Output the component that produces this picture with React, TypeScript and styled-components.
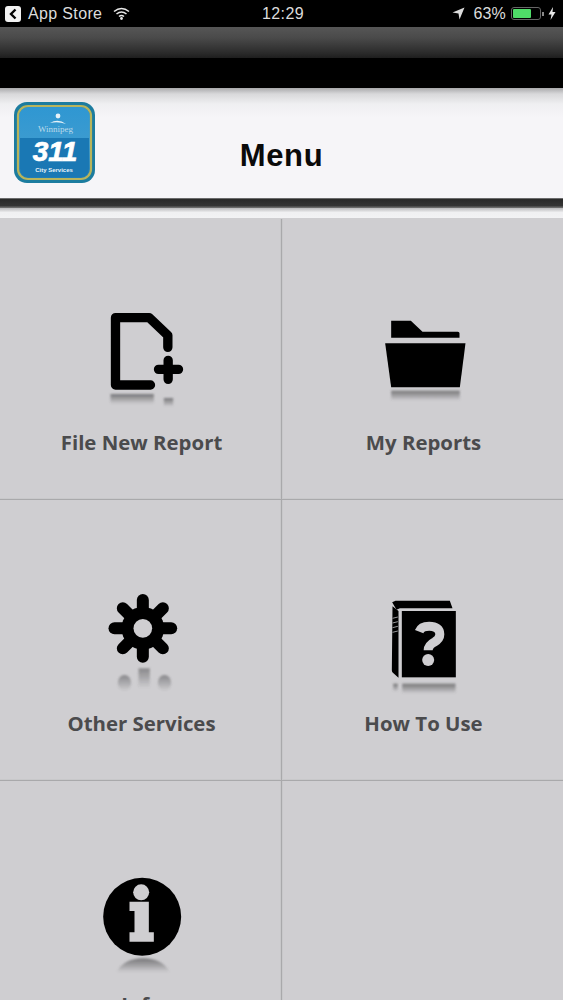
import React from "react";
import styled, { createGlobalStyle } from "styled-components";

const Global = createGlobalStyle`
  html, body { margin: 0; padding: 0; background: #cfced1; }
  body { width: 563px; height: 1000px; overflow: hidden; font-family: "Liberation Sans", Arial, sans-serif; }
`;
const Page = styled.div`
  width: 563px; height: 1000px; overflow: hidden; display: flex; flex-direction: column; background: #cfced1;
`;
const StatusBar = styled.div`
  height: 27px; flex: none; background: #000; color: #dcdcdc; display: flex; align-items: center;
  padding: 0 7px 0 5px; box-sizing: border-box; font-size: 16px; position: relative;
`;
const StatusLeft = styled.div`display: flex; align-items: center; gap: 7px;`;
const StatusRight = styled.div`display: flex; align-items: center; margin-left: auto;`;
const Clock = styled.span`
  position: absolute; left: 262px; top: 4px; font-size: 16px; letter-spacing: 0.4px; line-height: 20px;
`;
const BackBadge = styled.span`
  width: 16px; height: 16px; border-radius: 3px; background: #f2f2f2; display: flex; align-items: center; justify-content: center;
`;
const StoreName = styled.span`letter-spacing: 0.35px;`;
const Percent = styled.span`margin: 0 5px 0 8px; letter-spacing: 0.2px;`;
const Battery = styled.span`
  width: 30px; height: 13px; box-sizing: border-box; border: 1px solid #666; border-radius: 3px; padding: 1px 0 1px 1px; display: block;
`;
const BatteryLevel = styled.span`display: block; height: 100%; width: 66%; background: #4fdc68; border-radius: 1px;`;
const BatteryTip = styled.span`width: 2px; height: 4px; background: #888; margin: 0 4px 0 1px; display: block;`;
const NavGradient = styled.div`
  height: 31px; flex: none; background: linear-gradient(#565656, #4a4a4a 35%, #2a2a2a 85%, #1e1e1e);
`;
const NavBlack = styled.div`height: 30px; flex: none; background: #000;`;
const Header = styled.header`
  height: 110px; flex: none; box-sizing: border-box; padding: 14px 0 0 14px; display: grid;
  grid-template-columns: 1fr auto 1fr; align-items: start;
  background: linear-gradient(#a9a9ab, #d8d8da 6px, #efeff1 16px, #f6f5f8 30px, #f6f5f8);
`;
const Logo = styled.svg`width: 81px; height: 81px; display: block;`;
const Title = styled.h1`
  margin: 33px 0 0 -14px; font-size: 31px; font-weight: 700; line-height: 42px; color: #0a0a0a; letter-spacing: 0.6px;
`;
const DarkBar = styled.div`
  height: 10px; flex: none; background: linear-gradient(#8a8a8c, #2a2a2a 15%, #343434 75%, #777);
`;
const WhiteStrip = styled.div`
  height: 10px; flex: none; background: linear-gradient(#b9b9bb, #f0f0f2 45%, #f2f2f4);
`;
const Grid = styled.main`
  display: grid; grid-template-columns: 282px 281px; grid-auto-rows: 281px; flex: none; border-top: 1px solid #cfced1;
`;
const Cell = styled.div<{ $right?: boolean }>`
  box-sizing: border-box; display: flex; flex-direction: column; align-items: center; padding-top: 81px;
  border-bottom: 1px solid #a9a9ab; background: #cfced1;
  border-right: ${(p) => (p.$right ? "none" : "1px solid #a9a9ab")};
  box-shadow: inset ${(p) => (p.$right ? "1px" : "-1px")} -1px 0 #c8c8ca;
`;
const IconSvg = styled.svg`width: 120px; height: 120px; display: block; flex: none;`;
const Label = styled.span`
  margin: 8px 0 0 2px; font-family: "Open Sans", sans-serif; font-weight: 700; font-size: 20.4px; line-height: 28px; color: #4b4b4d;
`;

const BG = "#cfced1";
const Fade = ({ id, strength = 0.75 }: { id: string; strength?: number }) => (
  <defs>
    <linearGradient id={id} x1="0" y1="0" x2="0" y2="1">
      <stop offset="0" stopColor="#5a5a5c" stopOpacity={strength} />
      <stop offset="1" stopColor="#5a5a5c" stopOpacity="0" />
    </linearGradient>
    <filter id={id + "b"} x="-30%" y="-30%" width="160%" height="160%">
      <feGaussianBlur stdDeviation="2.5" />
    </filter>
  </defs>
);

const FileIcon = () => (
  <IconSvg viewBox="-28.5 0 360 360">
    <Fade id="f1" />
    <path d="M232 142V106L176 53H75V255H180" fill="none" stroke="#000" strokeWidth="28" strokeLinejoin="round" strokeLinecap="round" />
    <path d="M204 208H264M233 181V238" fill="none" stroke="#000" strokeWidth="28" strokeLinecap="round" />
    <g fill="url(#f1)" filter="url(#f1b)">
      <rect x="60" y="282" width="130" height="30" />
      <rect x="220" y="294" width="28" height="26" />
    </g>
  </IconSvg>
);
const FolderIcon = () => (
  <IconSvg viewBox="-22.5 0 360 360">
    <Fade id="f2" />
    <path d="M62 62H121L156 95H262Q267 95 267 100V113H62Z" fill="#000" />
    <path d="M44 130H285L268 262H62Z" fill="#000" />
    <rect x="62" y="272" width="206" height="30" fill="url(#f2)" filter="url(#f2b)" />
  </IconSvg>
);
const GearIcon = () => (
  <IconSvg viewBox="-28.5 -9 360 360">
    <Fade id="f3" strength={0.6} />
    <g transform="translate(157 133)">
      {[0, 45, 90, 135].map((a) => (
        <line key={a} x1="-85" y1="0" x2="85" y2="0" stroke="#000" strokeWidth="36" strokeLinecap="round" transform={`rotate(${a})`} />
      ))}
      <circle r="64" fill="#000" />
      <circle r="28" fill={BG} />
    </g>
    <g fill="url(#f3)" filter="url(#f3b)">
      <rect x="144" y="253" width="34" height="60" />
      <ellipse cx="102" cy="297" rx="20" ry="24" />
      <ellipse cx="222" cy="297" rx="20" ry="24" />
    </g>
  </IconSvg>
);
const BookIcon = () => (
  <IconSvg viewBox="-22.5 -24 360 360">
    <Fade id="f4" />
    <path d="M65 40L75 35H238L246 58H88L78 62Z" fill="#000" />
    <path d="M66 52L84 66V266L68 252Q64 250 64 244Z" fill="#000" />
    <rect x="94" y="66" width="162" height="199" fill="#000" />
    <path d="M66 88L82 84M66 102L82 98M66 116L82 112M66 130L82 126" stroke="#9a9a9c" strokeWidth="3" />
    <path d="M146 128Q152 112 176 112Q208 112 208 136Q208 150 192 159Q173 169 173 184" fill="none" stroke={BG} strokeWidth="27" />
    <circle cx="173" cy="213" r="18" fill={BG} />
    <g fill="url(#f4)" filter="url(#f4b)">
      <rect x="95" y="284" width="160" height="30" />
      <rect x="68" y="284" width="14" height="24" />
    </g>
  </IconSvg>
);
const InfoIcon = () => (
  <IconSvg viewBox="1.5 -21 360 360">
    <Fade id="f5" />
    <circle cx="185" cy="143" r="117" fill="#000" />
    <circle cx="182" cy="70" r="24" fill={BG} />
    <path d="M147 98H205V190H220V218H147V190H162V126H147Z" fill={BG} />
    <path d="M108 310Q130 268 188 268Q246 268 268 310Z" fill="url(#f5)" filter="url(#f5b)" />
  </IconSvg>
);

const LogoMark = () => (
  <Logo viewBox="0 0 81 81">
    <defs>
      <linearGradient id="lg" x1="0" y1="0" x2="0" y2="1">
        <stop offset="0" stopColor="#2f97d2" />
        <stop offset="0.5" stopColor="#3c9bd0" />
        <stop offset="1" stopColor="#1f7db6" />
      </linearGradient>
    </defs>
    <rect x="0" y="0" width="81" height="81" rx="13" fill="#1c7c9f" />
    <rect x="5" y="5" width="71" height="71" rx="9" fill="url(#lg)" />
    <path d="M6 36H75V66Q75 75 66 75H15Q6 75 6 66Z" fill="#1a78b4" />
    <rect x="4" y="4" width="73" height="73" rx="10" fill="none" stroke="#b8b45c" strokeWidth="2.2" />
    <path d="M36 21Q44 16 52 22Q44 19 36 21Z" fill="#e8f2f8" />
    <circle cx="44" cy="14" r="2.4" fill="#e8f2f8" />
    <text x="41.5" y="30" textAnchor="middle" fontFamily="'Liberation Serif', serif" fontSize="9" fill="#bcd9ea">Winnipeg</text>
    <text x="41" y="59" textAnchor="middle" fontFamily="'Liberation Sans', sans-serif" fontSize="28" fontWeight="700" fontStyle="italic" fill="#fff" stroke="#fff" strokeWidth="0.7">311</text>
    <text x="40" y="70" textAnchor="middle" fontFamily="'Liberation Sans', sans-serif" fontSize="6" fontWeight="700" fill="#e8f2f8">City Services</text>
  </Logo>
);

export default function App() {
  return (
    <Page>
      <Global />
      <StatusBar>
        <StatusLeft>
          <BackBadge>
            <svg width="10" height="12" viewBox="0 0 10 12">
              <path d="M7.5 1.5L3 6L7.5 10.5" fill="none" stroke="#000" strokeWidth="2.4" />
            </svg>
          </BackBadge>
          <StoreName>App Store</StoreName>
          <svg width="17" height="13" viewBox="0 0 17 13" style={{ marginLeft: 4 }}>
            <path d="M1 4.5Q8.5 -1.5 16 4.5M3.5 7Q8.5 3 13.5 7M6 9.5Q8.5 7.5 11 9.5" fill="none" stroke="#e8e8e8" strokeWidth="1.6" />
            <circle cx="8.5" cy="11.5" r="1.4" fill="#e8e8e8" />
          </svg>
        </StatusLeft>
        <Clock>12:29</Clock>
        <StatusRight>
          <svg width="13" height="13" viewBox="0 0 13 13">
            <path d="M12.5 0.5L7.5 12.5L6.5 6.5L0.5 5.5Z" fill="#dcdcdc" />
          </svg>
          <Percent>63%</Percent>
          <Battery><BatteryLevel /></Battery>
          <BatteryTip />
          <svg width="8" height="13" viewBox="0 0 8 13">
            <path d="M5 0L0.5 7.5H3.5L2.5 13L7.5 5H4.5Z" fill="#e8e8e8" />
          </svg>
        </StatusRight>
      </StatusBar>
      <NavGradient />
      <NavBlack />
      <Header>
        <LogoMark />
        <Title>Menu</Title>
      </Header>
      <DarkBar />
      <WhiteStrip />
      <Grid>
        <Cell><FileIcon /><Label>File New Report</Label></Cell>
        <Cell $right><FolderIcon /><Label>My Reports</Label></Cell>
        <Cell><GearIcon /><Label>Other Services</Label></Cell>
        <Cell $right><BookIcon /><Label>How To Use</Label></Cell>
        <Cell><InfoIcon /><Label>Info</Label></Cell>
        <Cell $right />
      </Grid>
    </Page>
  );
}
